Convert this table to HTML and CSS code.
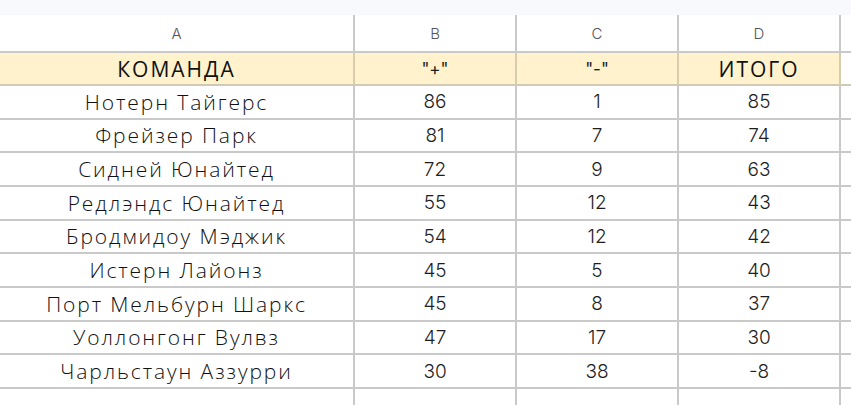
FILE: index.html
```html
<!DOCTYPE html>
<html lang="ru">
<head>
<meta charset="utf-8">
<title>Таблица</title>
<link rel="stylesheet" href="styles.css">
</head>
<body>
<div class="topband"></div>
<div class="sheet">
  <div class="cell colhead">A</div>
  <div class="cell colhead">B</div>
  <div class="cell colhead">C</div>
  <div class="cell colhead">D</div>
  <div class="cell colhead last"></div>

  <div class="cell head name">КОМАНДА</div>
  <div class="cell head num">"+"</div>
  <div class="cell head num">"-"</div>
  <div class="cell head name">ИТОГО</div>
  <div class="cell headrest last"></div>

  <div class="cell name">Нотерн Тайгерс</div><div class="cell num">86</div><div class="cell num">1</div><div class="cell num">85</div><div class="cell last"></div>
  <div class="cell name">Фрейзер Парк</div><div class="cell num">81</div><div class="cell num">7</div><div class="cell num">74</div><div class="cell last"></div>
  <div class="cell name">Сидней Юнайтед</div><div class="cell num">72</div><div class="cell num">9</div><div class="cell num">63</div><div class="cell last"></div>
  <div class="cell name">Редлэндс Юнайтед</div><div class="cell num">55</div><div class="cell num">12</div><div class="cell num">43</div><div class="cell last"></div>
  <div class="cell name">Бродмидоу Мэджик</div><div class="cell num">54</div><div class="cell num">12</div><div class="cell num">42</div><div class="cell last"></div>
  <div class="cell name">Истерн Лайонз</div><div class="cell num">45</div><div class="cell num">5</div><div class="cell num">40</div><div class="cell last"></div>
  <div class="cell name">Порт Мельбурн Шаркс</div><div class="cell num">45</div><div class="cell num">8</div><div class="cell num">37</div><div class="cell last"></div>
  <div class="cell name">Уоллонгонг Вулвз</div><div class="cell num">47</div><div class="cell num">17</div><div class="cell num">30</div><div class="cell last"></div>
  <div class="cell name">Чарльстаун Аззурри</div><div class="cell num">30</div><div class="cell num">38</div><div class="cell num">-8</div><div class="cell last"></div>
  <div class="cell"></div><div class="cell"></div><div class="cell"></div><div class="cell"></div><div class="cell last"></div>
</div>
</body>
</html>
```
FILE: styles.css
```css
html, body {
  margin: 0;
  padding: 0;
  background: #ffffff;
  width: 851px;
  height: 405px;
  overflow: hidden;
}
.topband {
  height: 15px;
  background: #f8f9fd;
}
.sheet {
  display: grid;
  grid-template-columns: 355px 162px 162px 162px 10px;
  grid-template-rows: 38px 33px repeat(10, 33.66px);
}
.cell {
  box-sizing: border-box;
  border-right: 2px solid #c9c9c9;
  border-bottom: 2px solid #c9c9c9;
  display: flex;
  align-items: center;
  justify-content: center;
  color: #1f1f1f;
  white-space: nowrap;
  overflow: hidden;
}
.cell.last {
  border-right: none;
}
.colhead {
  font-family: "Inter", "Liberation Sans", sans-serif;
  font-size: 15px;
  font-weight: 300;
  color: #555555;
  padding-top: 1px;
}
.head {
  background: #fff2cc;
  border-right-color: #d6cdae;
  border-bottom-color: #cfc9b6;
}
.headrest {
  border-bottom-color: #cfc9b6;
}
.name {
  font-family: "Open Sans", "Noto Sans", sans-serif;
  font-weight: 300;
  font-size: 21px;
  letter-spacing: 1.9px;
  color: #111111;
}
.head.name {
  font-weight: 400;
  font-size: 21px;
  letter-spacing: 2px;
  color: #111;
}
.num {
  font-family: "Inter", "Liberation Sans", sans-serif;
  font-size: 19px;
  font-weight: 300;
  color: #1e1e1e;
}
.head.num {
  font-size: 17px;
  font-weight: 400;
}
```
